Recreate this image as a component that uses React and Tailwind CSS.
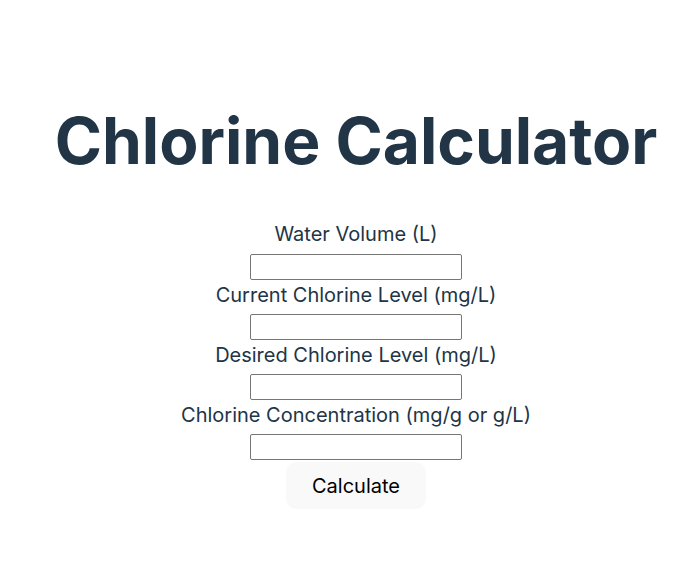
import React, { useState } from 'react';

const fields = [
  { key: 'volume', label: 'Water Volume (L)' },
  { key: 'current', label: 'Current Chlorine Level (mg/L)' },
  { key: 'desired', label: 'Desired Chlorine Level (mg/L)' },
  { key: 'concentration', label: 'Chlorine Concentration (mg/g or g/L)' },
];

const App = () => {
  const [values, setValues] = useState({ volume: '', current: '', desired: '', concentration: '' });

  return (
    <div className="min-h-screen bg-white text-[#213547] font-['Inter',sans-serif] pl-[26px]">
      <div className="flex flex-col items-center pt-[106px]">
        <h1 className="text-[64px] leading-[70.4px] font-bold whitespace-nowrap">
          Chlorine Calculator
        </h1>

        {/* Formulario */}
        <div className="flex flex-col items-center mt-[43px]">
          {fields.map((f) => (
            <div key={f.key} className="flex flex-col items-center">
              <label className="text-[20px] leading-[30.2px] mb-[4px]">{f.label}</label>
              <input
                type="number"
                value={values[f.key]}
                onChange={(e) => setValues({ ...values, [f.key]: e.target.value })}
                className="w-[212px] h-[26px] border border-[#767676] rounded-[2px] bg-white px-1 text-[16px]"
              />
            </div>
          ))}
          <button className="mt-[2px] w-[140px] h-[47px] rounded-[10px] bg-[#f9f9f9] text-[20px] font-normal text-black">
            Calculate
          </button>
        </div>
      </div>
    </div>
  );
};

export default App;
